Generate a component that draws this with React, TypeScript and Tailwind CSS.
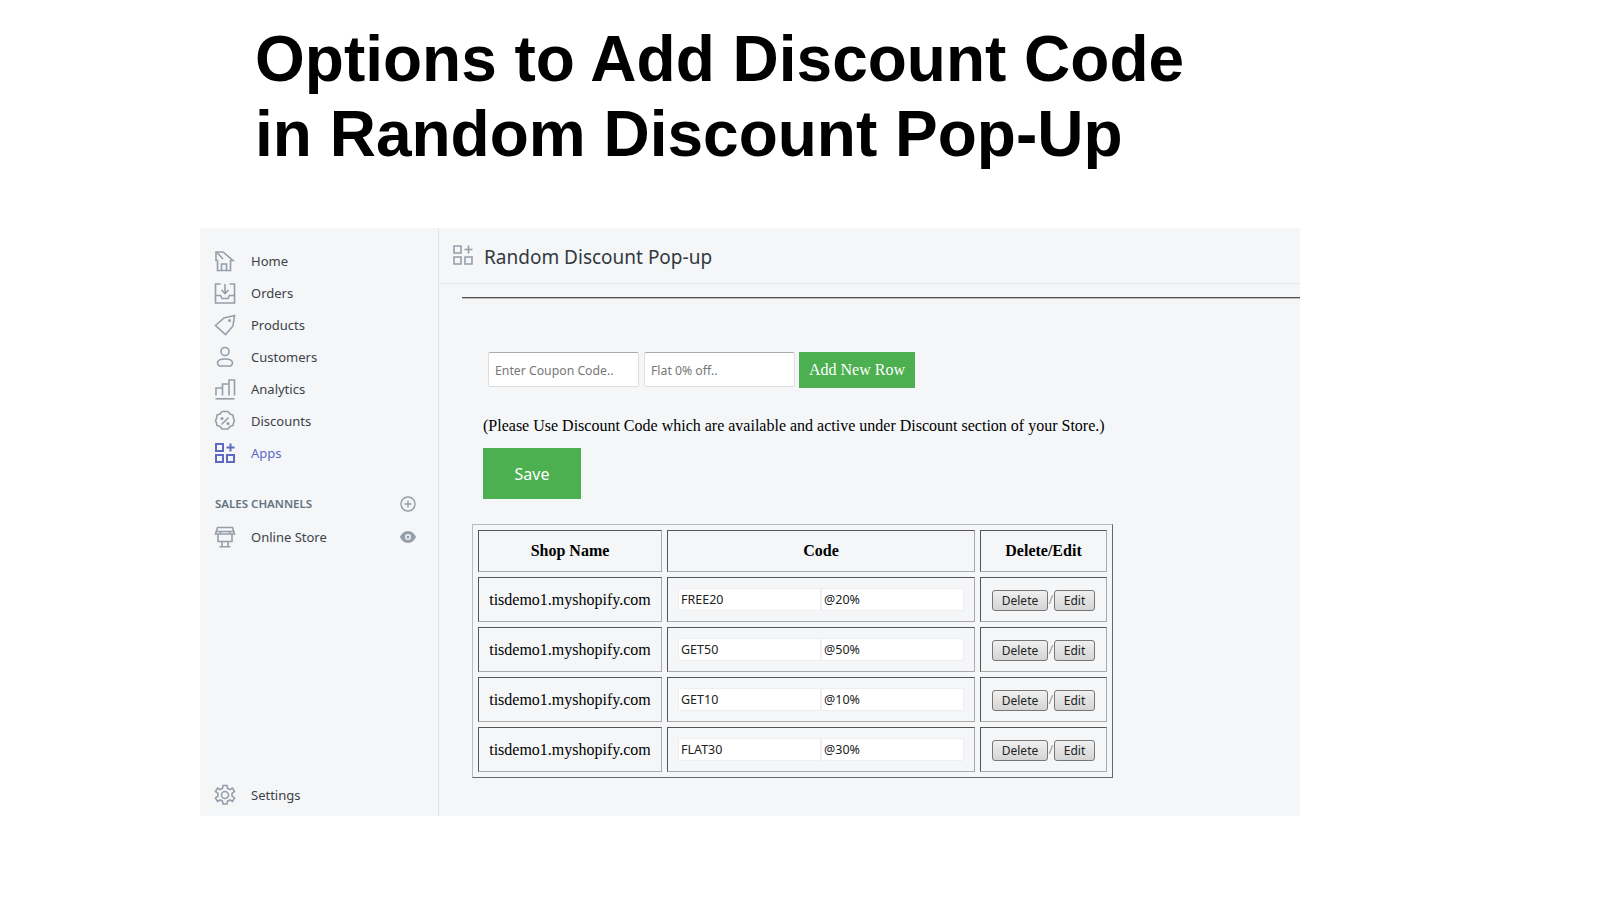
import type { ReactNode } from 'react'

const ICON = '-translate-y-px h-[22px] w-[22px] shrink-0 overflow-visible fill-none stroke-[#959fa9] stroke-[1.6]'

function Icon({ children, className = ICON }: { children: ReactNode; className?: string }) {
  return (
    <svg viewBox="1 0 22 22" className={className} aria-hidden="true">
      {children}
    </svg>
  )
}

const navItems: { label: string; icon: ReactNode; active?: boolean }[] = [
  {
    label: 'Home',
    icon: (
      <Icon>
        <path d="M3.500 10.500H2V2h7l10 8.500h-2.500V20.500h-13z" />
        <path d="M3 2.500l6 6.500M7.500 20.500v-6.500h5v6.500" />
      </Icon>
    ),
  },
  {
    label: 'Orders',
    icon: (
      <Icon>
        <path d="M6.500 2H1.500v19h19V2h-5" />
        <path d="M1.500 13.500h5l1.500 3h6l1.500-3h5" />
        <path d="M11 2v9M7.500 8l3.500 3.500L14.500 8" />
      </Icon>
    ),
  },
  {
    label: 'Products',
    icon: (
      <Icon>
        <path d="M1.500 11.500L10 4l10.500-2.500L19 12l-7.500 8.500z" />
        <circle cx="15.500" cy="6.500" r="0.700" />
      </Icon>
    ),
  },
  {
    label: 'Customers',
    icon: (
      <Icon>
        <circle cx="11" cy="5.500" r="4" />
        <path d="M3.500 17c0-2.500 3-4 7.500-4s7.500 1.500 7.500 4c0 1.500-1.500 3-3 3h-9c-1.500 0-3-1.500-3-3z" />
      </Icon>
    ),
  },
  {
    label: 'Analytics',
    icon: (
      <Icon>
        <path d="M2 17.500V10h6.500v7.500M8.500 17.500V6h6.500v11.500M15 17.500V2h5.500v15.500" />
        <path d="M1.500 20.800h19" />
      </Icon>
    ),
  },
  {
    label: 'Discounts',
    icon: (
      <Icon>
        <path d="M8 1.500h6l2 2.500 3 1 .5 3.500 1 2-1 2.500-.5 2.500-3 1-2 2.500H8l-2-2.500-3-1-.5-2.500-1-2.500 1-2L3 5l3-1z" />
        <path d="M7.500 14.500l7-7" />
        <circle cx="8" cy="8.500" r="0.800" />
        <circle cx="14" cy="13.500" r="0.800" />
      </Icon>
    ),
  },
  {
    label: 'Apps',
    active: true,
    icon: (
      <Icon className="-translate-y-px h-[22px] w-[22px] shrink-0 overflow-visible fill-none stroke-[#5c6ac4] stroke-2">
        <path d="M2 2h7v7H2zM2 13h7v7H2zM13 13h7v7h-7zM16.500 1.500v8M12.500 5.500h8" />
      </Icon>
    ),
  },
]

const rows = [
  ['FREE20', '@20%'],
  ['GET50', '@50%'],
  ['GET10', '@10%'],
  ['FLAT30', '@30%'],
]

const CELL = 'border border-t-[#555] border-l-[#555] border-r-[#aaa] border-b-[#aaa] p-0'
const FIELD = 'h-[23px] w-[143px] rounded-[2px] border border-[#eceef0] bg-white pl-[2px] text-[12.500px] leading-[22px] text-[#222]'
const INPUT = "flex h-[35px] w-[151px] items-center rounded-[2px] border border-[#ddd] border-t-[#aaa] bg-white pt-[3px] pl-[6px] font-['Noto_Sans',sans-serif] text-[12.250px] text-[#777]"

function ActionButton({ label, className }: { label: string; className: string }) {
  return (
    <button
      type="button"
      className={`h-[21px] rounded-[3px] border border-[#777] bg-gradient-to-b from-[#f0f0f0] to-[#d4d4d4] text-center text-[12px] leading-[19px] text-[#222] ${className}`}
    >
      {label}
    </button>
  )
}

export default function App() {
  return (
    <div className="min-h-[900px] w-[1600px] bg-white pt-[22px] font-['Liberation_Sans',sans-serif]">
      <h1 className="ml-[255px] text-[64px] leading-[75px] font-bold text-black">
        Options to Add Discount Code
        <br />
        in Random Discount Pop-Up
      </h1>

      <div className="mt-[56px] ml-[200px] flex h-[588px] w-[1100px] bg-[#f4f6f8]">
        <aside className="flex w-[239px] shrink-0 flex-col border-r border-r-[#dfe3e8] px-[15px] pt-[23px] pb-[9px] font-['Noto_Sans',sans-serif] text-[13px] text-[#3c4248]">
          <nav className="flex flex-col gap-[10px]">
            {navItems.map((item) => (
              <div key={item.label} className="flex h-[22px] items-center gap-[14px]">
                {item.icon}
                <span className={item.active ? 'text-[#5c6ac4]' : ''}>{item.label}</span>
              </div>
            ))}
          </nav>

          <div className="mt-[28px] flex h-[22px] items-center justify-between pr-[7px]">
            <span className="text-[11.500px] font-semibold text-[#637381]">SALES CHANNELS</span>
            <svg viewBox="0 0 16 16" className="h-4 w-4 fill-none stroke-[#959fa9] stroke-[1.5]" aria-hidden="true">
              <circle cx="8" cy="8" r="7" />
              <path d="M8 4.500v7M4.500 8h7" />
            </svg>
          </div>

          <div className="mt-[12px] flex h-[22px] items-center pr-[7px]">
            <Icon>
              <path d="M3.500 1.500h15l2 6.500H1.500zM4 8v7.500h14V8M1.500 5.500h19M7 5.500L6 8M15 5.500L16 8M8 15.500v5M14 15.500v5M5.500 20.800h11" />
            </Icon>
            <span className="ml-[14px] flex-1">Online Store</span>
            <svg viewBox="0 0 16 12" className="-mt-[2px] h-3 w-4 fill-[#959fa9]" aria-hidden="true">
              <path
                fillRule="evenodd"
                d="M8 0c4 0 7 3.500 8 6-1 2.500-4 6-8 6S1 8.500 0 6c1-2.500 4-6 8-6zm0 3a3 3 0 1 0 0 6 3 3 0 0 0 0-6z"
              />
              <circle cx="8" cy="6" r="1.600" />
            </svg>
          </div>

          <div className="mt-auto flex h-[22px] items-center gap-[14px]">
            <Icon>
              <circle cx="11" cy="11" r="3.500" />
              <path d="M9 1.500h4l.5 3 2.500 1 2.500-1.500 2 3.500-2.500 2v2.500l2.500 2-2 3.500-2.500-1.500-2.500 1-.5 3H9l-.5-3-2.500-1-2.500 1.500-2-3.500 2.500-2V9.500l-2.500-2 2-3.500 2.500 1.500 2.500-1z" />
            </Icon>
            <span>Settings</span>
          </div>
        </aside>

        <main className="min-w-0 flex-1">
          <header className="flex h-[56px] items-center gap-[9px] border-b border-b-[#e6e8eb] pt-[1px] pl-[14px]">
            <Icon>
              <path d="M2 2h7v7H2zM2 13h7v7H2zM13 13h7v7h-7zM16.500 1.500v8M12.500 5.500h8" />
            </Icon>
            <span className="pt-[2px] font-['Noto_Sans',sans-serif] text-[19px] text-[#33393f]">Random Discount Pop-up</span>
          </header>

          <div className="mt-[13px] ml-[23px] h-[2px] border-t border-t-[#555] border-b border-b-[#bbb]" />

          <div className="mt-[53px] ml-[49px] flex items-start">
            <div className={INPUT}>Enter Coupon Code..</div>
            <div className={`ml-[5px] ${INPUT}`}>Flat 0% off..</div>
            <button
              type="button"
              className="ml-[4px] h-[36px] w-[116px] bg-[#4caf50] font-['Liberation_Serif',serif] text-[16px] text-white"
            >
              Add New Row
            </button>
          </div>

          <p className="mt-[28px] ml-[44px] font-['Liberation_Serif',serif] text-[16px] leading-[20px] text-black">
            (Please Use Discount Code which are available and active under Discount section of your Store.)
          </p>

          <button
            type="button"
            className="mt-[12px] ml-[44px] block h-[51px] w-[98px] bg-[#4caf50] font-['Noto_Sans',sans-serif] text-[16px] text-white"
          >
            Save
          </button>

          <table className="mt-[25px] ml-[33px] w-[641px] table-fixed border-separate border-spacing-[5px] border border-t-[#bbb] border-l-[#bbb] border-r-[#666] border-b-[#666] font-['Liberation_Serif',serif] text-[16px] text-black">
            <thead>
              <tr className="h-[42px]">
                <th className={`${CELL} w-[184px]`}>Shop Name</th>
                <th className={`${CELL} w-[308px]`}>Code</th>
                <th className={CELL}>Delete/Edit</th>
              </tr>
            </thead>
            <tbody>
              {rows.map(([code, amount]) => (
                <tr key={code} className="h-[45px]">
                  <td className={`${CELL} pt-[1px] text-center`}>tisdemo1.myshopify.com</td>
                  <td className={CELL}>
                    <div className="flex pl-[10px] font-['Noto_Sans',sans-serif]">
                      <div className={FIELD}>{code}</div>
                      <div className={FIELD}>{amount}</div>
                    </div>
                  </td>
                  <td className={`${CELL} pt-[1px]`}>
                    <div className="flex items-center pl-[11px] font-['Noto_Sans',sans-serif]">
                      <ActionButton label="Delete" className="w-[56px]" />
                      <span className="w-[6px] text-center text-[13px] text-[#999]">/</span>
                      <ActionButton label="Edit" className="w-[41px]" />
                    </div>
                  </td>
                </tr>
              ))}
            </tbody>
          </table>
        </main>
      </div>
    </div>
  )
}
